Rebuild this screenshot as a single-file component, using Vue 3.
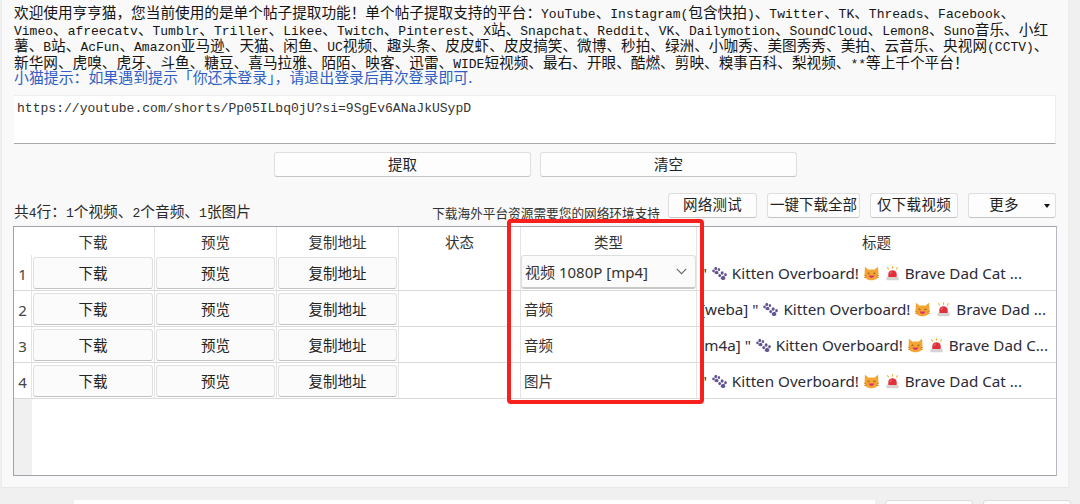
<script setup>
const introLines = [
  '欢迎使用亨亨猫，您当前使用的是单个帖子提取功能！单个帖子提取支持的平台：YouTube、Instagram(包含快拍)、Twitter、TK、Threads、Facebook、',
  'Vimeo、afreecatv、Tumblr、Triller、Likee、Twitch、Pinterest、X站、Snapchat、Reddit、VK、Dailymotion、SoundCloud、Lemon8、Suno音乐、小红',
  '薯、B站、AcFun、Amazon亚马逊、天猫、闲鱼、UC视频、趣头条、皮皮虾、皮皮搞笑、微博、秒拍、绿洲、小咖秀、美图秀秀、美拍、云音乐、央视网(CCTV)、',
  '新华网、虎嗅、虎牙、斗鱼、糖豆、喜马拉雅、陌陌、映客、迅雷、WIDE短视频、最右、开眼、酷燃、剪映、糗事百科、梨视频、**等上千个平台！'
]
const splitRuns = (s) => s.match(/[\x00-\x7f]+|[^\x00-\x7f]+/g).map((t) => ({ t, latin: /^[\x00-\x7f]/.test(t) }))
const intro = introLines.map(splitRuns)
const summary = splitRuns('共4行：1个视频、2个音频、1张图片')
const rows = [
  { n: 1, type: '视频 1080P [mp4]', select: true, prefix: '', cls: 'pad-a' },
  { n: 2, type: '音频', prefix: '[weba] ', cls: 'pad-b', tail: 'Brave Dad ...' },
  { n: 3, type: '音频', prefix: '[m4a] ', cls: 'pad-c', tail: 'Brave Dad C...' },
  { n: 4, type: '图片', prefix: '', cls: 'pad-a' }
]
</script>

<template>
  <div class="page">
    <svg class="defs" aria-hidden="true">
      <symbol id="paw" viewBox="0 0 16 16">
        <g fill="#5f5590">
          <ellipse cx="4" cy="2.600" rx="1.500" ry="1.800" />
          <ellipse cx="1.600" cy="5.200" rx="1.400" ry="1.500" />
          <ellipse cx="7.400" cy="3.800" rx="1.300" ry="1.600" />
          <path d="M2.500 7.600c0-1.600 1.500-2.600 2.600-2.600S7 6.300 6.800 7.800 4 9 2.500 7.600z" />
          <ellipse cx="10.800" cy="7.400" rx="1.600" ry="1.900" />
          <ellipse cx="8.200" cy="10.200" rx="1.500" ry="1.700" />
          <ellipse cx="14.400" cy="9.200" rx="1.400" ry="1.800" />
          <path d="M9.200 13.600c0-2 1.800-3.200 3-3.200s2.200 1.700 2 3.300-3.400 1.700-5-.1z" />
        </g>
      </symbol>
      <symbol id="cat" viewBox="0 0 16 16">
        <path d="M1 .8 5 4c1.900-.5 4.100-.5 6 0l4-3.200.4 8c.4 4.200-3 6.400-7.400 6.400S.2 13 .6 8.800z" fill="#f4a534" />
        <path d="M3.800 8.200c.5-.8 1.600-.8 2.100 0M10.100 8.200c.5-.8 1.600-.8 2.100 0" fill="none" stroke="#6d3f10" stroke-width="1" />
        <path d="M4.800 10.200c1.200 3.400 5.200 3.400 6.400 0z" fill="#d8336e" />
        <path d="M0 9.800l2.600.6M0 12.400l2.600-.6M16 9.800l-2.600.6M16 12.400l-2.600-.6" stroke="#c77a22" stroke-width=".7" />
      </symbol>
      <symbol id="siren" viewBox="0 0 16 16">
        <path d="M8 .2v2.600M2.400 1.400l1.600 2.400M13.600 1.400 12 3.800" stroke="#f2b23e" stroke-width="1.200" />
        <path d="M3.500 11.800V8.500C3.500 6 5.500 4.400 8 4.400s4.500 1.600 4.500 4.100v3.300z" fill="#e2303a" />
        <path d="M5.500 8.500c0-1.200.8-2 1.800-2.200" fill="none" stroke="#f58a8a" stroke-width="1" />
        <rect x="1.500" y="11.800" width="13" height="3.400" rx=".5" fill="#d6d2d2" />
      </symbol>
    </svg>

    <main class="panel">
      <section class="intro">
        <div v-for="(line, i) in intro" :key="i" class="intro-line">
          <span v-for="(run, j) in line" :key="j" :class="run.latin ? 'mono' : 'cjk'">{{ run.t }}</span>
        </div>
        <div class="tip">小猫提示：如果遇到提示「你还未登录」，请退出登录后再次登录即可.</div>
      </section>

      <div class="url-box">https://youtube.com/shorts/Pp05ILbq0jU?si=9SgEv6ANaJkUSypD</div>

      <div class="actions">
        <button class="btn wide">提取</button>
        <button class="btn wide">清空</button>
      </div>

      <div class="toolbar">
        <div class="summary">
          <span v-for="(run, j) in summary" :key="j" :class="run.latin ? 'mono' : 'cjk'">{{ run.t }}</span>
        </div>
        <div class="note">下载海外平台资源需要您的网络环境支持</div>
        <button class="btn tool first">网络测试</button>
        <button class="btn tool tight">一键下载全部</button>
        <button class="btn tool third">仅下载视频</button>
        <button class="btn tool more">更多<i class="caret"></i></button>
      </div>

      <div class="table-wrap">
        <div class="grid">
          <div class="cell head corner"></div>
          <div class="cell head">下载</div>
          <div class="cell head">预览</div>
          <div class="cell head">复制地址</div>
          <div class="cell head">状态</div>
          <div class="cell head">类型</div>
          <div class="cell head last">标题</div>

          <template v-for="row in rows" :key="row.n">
            <div class="cell rowno">{{ row.n }}</div>
            <div class="cell act"><button class="btn cellbtn">下载</button></div>
            <div class="cell act"><button class="btn cellbtn">预览</button></div>
            <div class="cell act"><button class="btn cellbtn">复制地址</button></div>
            <div class="cell"></div>
            <div class="cell type" :class="{ 'has-select': row.select }">
              <div v-if="row.select" class="select">
                <span>{{ row.type }}</span>
                <svg class="chev" viewBox="0 0 10 6"><path d="M.7.7 5 5 9.300.7" fill="none" stroke="#666" stroke-width="1" /></svg>
              </div>
              <span v-else>{{ row.type }}</span>
            </div>
            <div class="cell title last" :class="row.cls">
              <span class="title-text">{{ row.prefix }}" <svg class="emo paw"><use href="#paw" /></svg> Kitten Overboard! <svg class="emo"><use href="#cat" /></svg> <svg class="emo"><use href="#siren" /></svg> {{ row.tail || 'Brave Dad Cat ...' }}</span>
            </div>
          </template>
        </div>
        <div class="empty"><div class="empty-side"></div></div>
      </div>
    </main>

    <footer class="bottom">
      <div class="bottom-input"></div>
      <div class="bottom-btn"></div>
      <div class="bottom-btn"></div>
    </footer>

    <div class="redbox"></div>
  </div>
</template>

<style scoped>
.page {
  position: relative;
  width: 1080px;
  height: 504px;
  overflow: hidden;
  background: #f0f0f0;
  color: #222;
  font-family: "Noto Sans CJK SC", "Noto Sans", sans-serif;
}
.defs { position: absolute; width: 0; height: 0; }
.panel {
  width: 1068px;
  height: 488px;
  margin-left: 1px;
  padding: 3px 12px 0 12px;
  box-sizing: border-box;
  background: #f9f9f9;
  border-left: 1px solid #ececec;
  border-right: 1px solid #ececec;
  border-bottom: 1px solid #e8e8e8;
  display: flex;
  flex-direction: column;
}
.intro { height: 92px; }
.intro-line {
  height: 16.500px;
  line-height: 16.500px;
  white-space: nowrap;
  color: #141414;
}
.cjk { font-size: 14.650px; }
.mono { font-family: "Liberation Mono", monospace; font-size: 13px; }
.tip {
  height: 16.500px;
  line-height: 16.500px;
  font-size: 14.900px;
  color: #2f5fc4;
  white-space: nowrap;
}
.url-box {
  height: 49px;
  box-sizing: border-box;
  padding: 5px 3px;
  background: #fff;
  border-top: 1px solid #eee;
  border-right: 1px solid #eee;
  border-bottom: 1px solid #a8a8a8;
  font-family: "Liberation Mono", monospace;
  font-size: 13.050px;
  line-height: 16px;
  color: #333;
}
.actions {
  display: flex;
  gap: 9px;
  margin: 8px 0 0 260px;
}
.btn {
  box-sizing: border-box;
  margin: 0;
  padding: 0;
  border: 1px solid #dfdfdf;
  border-bottom-color: #c4c4c4;
  border-radius: 3px;
  background: #fdfdfd;
  color: #222;
  font-family: inherit;
  font-size: 14.500px;
  line-height: 1;
}
.wide { width: 257px; height: 25px; }
.toolbar {
  display: flex;
  align-items: flex-start;
  height: 25px;
  margin-top: 16px;
  width: 1042px;
}
.summary { margin-top: 7px; line-height: 20px; white-space: nowrap; color: #2a2a2a; }
.summary .cjk { font-size: 14.700px; }
.note {
  margin: 10px 8px 0 auto;
  line-height: 20px;
  font-size: 12.660px;
  white-space: nowrap;
  color: #333;
}
.tool { width: 88px; height: 25px; margin-left: 10px; padding-bottom: 2px; letter-spacing: .3px; }
.first { width: 89px; margin-left: 0; }
.tight { width: 93px; letter-spacing: 0; }
.more { position: relative; padding-right: 16px; }
.caret {
  position: absolute;
  right: 5px;
  top: 10px;
  border-left: 3.500px solid transparent;
  border-right: 3.500px solid transparent;
  border-top: 4px solid #111;
}
.table-wrap {
  width: 1044px;
  height: 250px;
  margin: 8px 0 0 -1px;
  box-sizing: border-box;
  background: #fff;
  border: 1px solid #a2a2aa;
  border-right-color: #b8b8c0;
  display: flex;
  flex-direction: column;
}
.grid {
  display: grid;
  grid-template-columns: 18px 123px 122px 122px 122px 176px 1fr;
  grid-template-rows: 28px repeat(4, 36px);
}
.cell {
  box-sizing: border-box;
  min-width: 0;
  border-right: 1px solid #e4e4e4;
  border-bottom: 1px solid #dadada;
  display: flex;
  align-items: center;
  justify-content: center;
  font-size: 14.500px;
  color: #333;
}
.head { border-bottom: 0; }
.head.corner { border-right: 0; }
.last { border-right: 0; }
.rowno {
  border-right: 1px solid #e4e4e4;
  padding-top: 2px;
  font-family: "Noto Sans", sans-serif;
  font-size: 15px;
  color: #444;
}
.act { padding: 2px 1px 1px; }
.cellbtn { width: 100%; height: 100%; background: #fbfbfb; border-color: #e0e0e0; border-bottom-color: #c2c2c2; }
.type { justify-content: flex-start; padding-left: 3px; }
.has-select { padding: 0; align-items: stretch; }
.select {
  flex: 1;
  display: flex;
  align-items: center;
  justify-content: space-between;
  box-sizing: border-box;
  padding: 0 8px 0 3px;
  margin-bottom: 1px;
  background: #fbfbfb;
  border: 1px solid #dedede;
  border-bottom: 2px solid #c8c8c8;
  border-radius: 3px;
  font-family: "Noto Sans", "Noto Sans CJK SC", sans-serif;
  font-size: 15px;
}
.chev { width: 11px; height: 7px; }
.title { justify-content: flex-end; overflow: hidden; }
.title-text {
  flex: none;
  white-space: nowrap;
  font-family: "Noto Sans", "Noto Sans CJK SC", sans-serif;
  font-size: 15.200px;
  color: #2b2b38;
}
.pad-a { padding-right: 34px; }
.pad-b { padding-right: 10px; }
.pad-c { padding-right: 8px; }
.emo { width: 15px; height: 15px; vertical-align: -2px; margin: 0 1px; }
.empty { flex: 1; display: flex; }
.empty-side { width: 18px; background: #f0f0f0; }
.bottom {
  display: flex;
  gap: 10px;
  margin: 12px 0 0 74px;
}
.bottom-input { width: 801px; height: 20px; background: #fff; }
.bottom-btn { width: 88px; height: 20px; background: #fdfdfd; border: 1px solid #dcdcdc; border-radius: 3px; box-sizing: border-box; }
.redbox {
  position: absolute;
  left: 507px;
  top: 219px;
  width: 197px;
  height: 185px;
  box-sizing: border-box;
  border: 4px solid #f7201c;
  border-radius: 4px;
  pointer-events: none;
}
</style>
